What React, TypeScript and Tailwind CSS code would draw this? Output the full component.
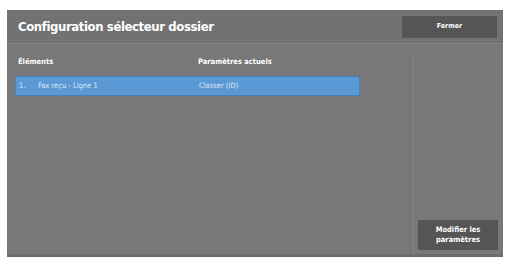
import React from 'react';

const rows = [{ num: '1.', name: 'Fax reçu - Ligne 1', value: 'Classer (ID)' }];

const App: React.FC = () => {
  return (
    <div className="w-[509px] h-[262px] bg-white pt-[10px] pl-[7px] pr-[6px] pb-[5px]" style={{ fontFamily: '"DejaVu Sans Condensed", "Liberation Sans", sans-serif' }}>
      <div className="h-full flex flex-col bg-[#787878] border-b-[3px] border-[#6c6c6c]">
        {/* Header */}
        <div className="h-[34px] flex items-center justify-between pl-[11px] pr-[6px] bg-[#727272] border-b border-[#858585]">
          <h1 className="text-[13px] font-bold text-white tracking-[-0.4px]">Configuration sélecteur dossier</h1>
          <button className="w-[95px] h-[22px] bg-[#555555] text-white text-[7px] font-bold">Fermer</button>
        </div>

        {/* Body */}
        <div className="flex-1 flex">
          <div className="flex-1 flex flex-col pl-[8px] pt-[11px]">
            <div className="flex text-[7.5px] font-bold text-white h-[14px] items-center">
              <div className="w-[183px] pl-[3px]">Éléments</div>
              <div>Paramètres actuels</div>
            </div>
            <div className="mt-[7px] w-[345px]">
              {rows.map((r, i) => (
                <div key={i} className="h-[20px] flex items-center bg-[#5b98d6] border border-[#4a7fb5] text-[7.5px] text-[#dbe8f5]">
                  <div className="w-[183px] flex pl-[3px]">
                    <span className="w-[19px]">{r.num}</span>
                    <span>{r.name}</span>
                  </div>
                  <div>{r.value}</div>
                </div>
              ))}
            </div>
          </div>

          {/* Right side column */}
          <div className="w-[90px] flex flex-col justify-end border-l border-[#858585] mt-[12px] pb-[4px] pl-[4px]">
            <button className="w-[80px] h-[30px] bg-[#555555] text-white text-[7.5px] font-bold leading-[10px]">
              Modifier les<br />paramètres
            </button>
          </div>
        </div>
      </div>
    </div>
  );
};

export default App;
